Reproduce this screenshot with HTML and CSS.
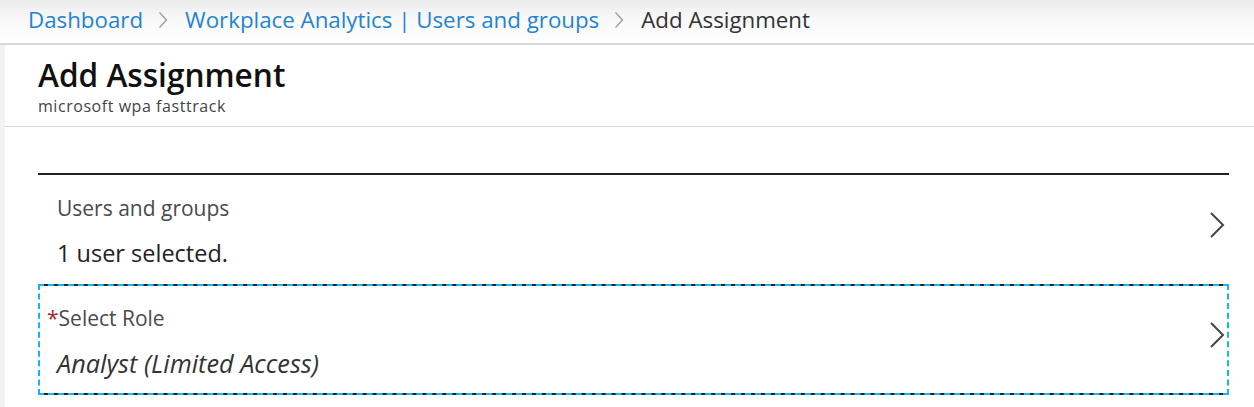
FILE: index.html
```html
<!DOCTYPE html>
<html>
<head>
<meta charset="utf-8">
<link rel="stylesheet" href="styles.css">
</head>
<body>
<nav class="crumbs">
  <a class="crumb-link">Dashboard</a>
  <svg class="sep" width="10" height="18" viewBox="0 0 10 18"><path d="M1.5 1.5 L8.5 9 L1.5 16.5" fill="none" stroke="#9a9a9a" stroke-width="1.3"/></svg>
  <a class="crumb-link">Workplace Analytics | Users and groups</a>
  <svg class="sep" width="10" height="18" viewBox="0 0 10 18"><path d="M1.5 1.5 L8.5 9 L1.5 16.5" fill="none" stroke="#9a9a9a" stroke-width="1.3"/></svg>
  <span class="crumb-current">Add Assignment</span>
</nav>
<div class="page">
  <header class="blade-head">
    <h1 class="title">Add Assignment</h1>
    <div class="subtitle">microsoft wpa fasttrack</div>
  </header>
  <main class="content">
    <div class="rule"></div>
    <div class="row">
      <div class="row-text">
        <div class="label">Users and groups</div>
        <div class="value">1 user selected.</div>
      </div>
      <svg class="chev" width="16" height="28" viewBox="0 0 16 28"><path d="M2 2 L14 14 L2 26" fill="none" stroke="#444" stroke-width="2"/></svg>
    </div>
    <div class="row row-focus">
      <div class="row-text">
        <div class="label label-req"><span class="star">*</span>Select Role</div>
        <div class="value value-italic">Analyst (Limited Access)</div>
      </div>
      <svg class="chev" width="16" height="28" viewBox="0 0 16 28"><path d="M2 2 L14 14 L2 26" fill="none" stroke="#444" stroke-width="2"/></svg>
    </div>
  </main>
</div>
</body>
</html>
```
FILE: styles.css
```css
* { box-sizing: border-box; }
html, body { margin: 0; padding: 0; background: #fff; }
body {
  font-family: "Open Sans", "Noto Sans", "Liberation Sans", sans-serif;
  color: #222;
  width: 1254px;
  height: 407px;
  overflow: hidden;
}
.crumbs {
  height: 45px;
  display: flex;
  align-items: center;
  padding: 0 0 4px 28px;
  font-size: 22.3px;
  background: linear-gradient(#ececec, #f8f8f8 40%, #fff);
  border-bottom: 2px solid #d9d9d9;
  white-space: nowrap;
}
.crumb-link { color: #1f84d2; }
.crumb-current { color: #333; }
.sep {
  display: block;
  margin: 0 17px 0 15px;
}
.page {
  border-left: 5px solid #f2f2f2;
  height: 362px;
}
.blade-head {
  padding: 10px 0 0 33px;
  height: 82px;
  border-bottom: 1px solid #d4d4d4;
}
.title {
  margin: 0;
  font-size: 31.6px;
  font-weight: 600;
  line-height: 40px;
  color: #111;
}
.subtitle {
  font-size: 16px;
  color: #444;
  line-height: 22px;
  letter-spacing: 0.55px;
}
.content {
  padding: 46px 25px 0 33px;
}
.rule {
  height: 2px;
  background: #222;
}
.row {
  display: flex;
  align-items: center;
  justify-content: space-between;
  height: 109px;
  padding: 0 4px 0 19px;
}
.row-text {
  display: flex;
  flex-direction: column;
  gap: 17px;
  padding-top: 4px;
}
.label {
  font-size: 21px;
  color: #4a4a4a;
  line-height: 26px;
}
.value {
  font-size: 23.5px;
  color: #222;
  line-height: 30px;
}
.chev { display: block; margin-bottom: 9px; }
.row-focus {
  border-top: 2px solid #222;
  border-bottom: 2px solid #222;
  outline: 2px dashed #16b6ee;
  outline-offset: -2px;
  height: 111px;
  padding-left: 9px;
}
.star { color: #a4262c; margin-right: 0; }
.value-italic { font-style: italic; color: #333; margin-left: 10px; font-size: 25.3px; }
```
